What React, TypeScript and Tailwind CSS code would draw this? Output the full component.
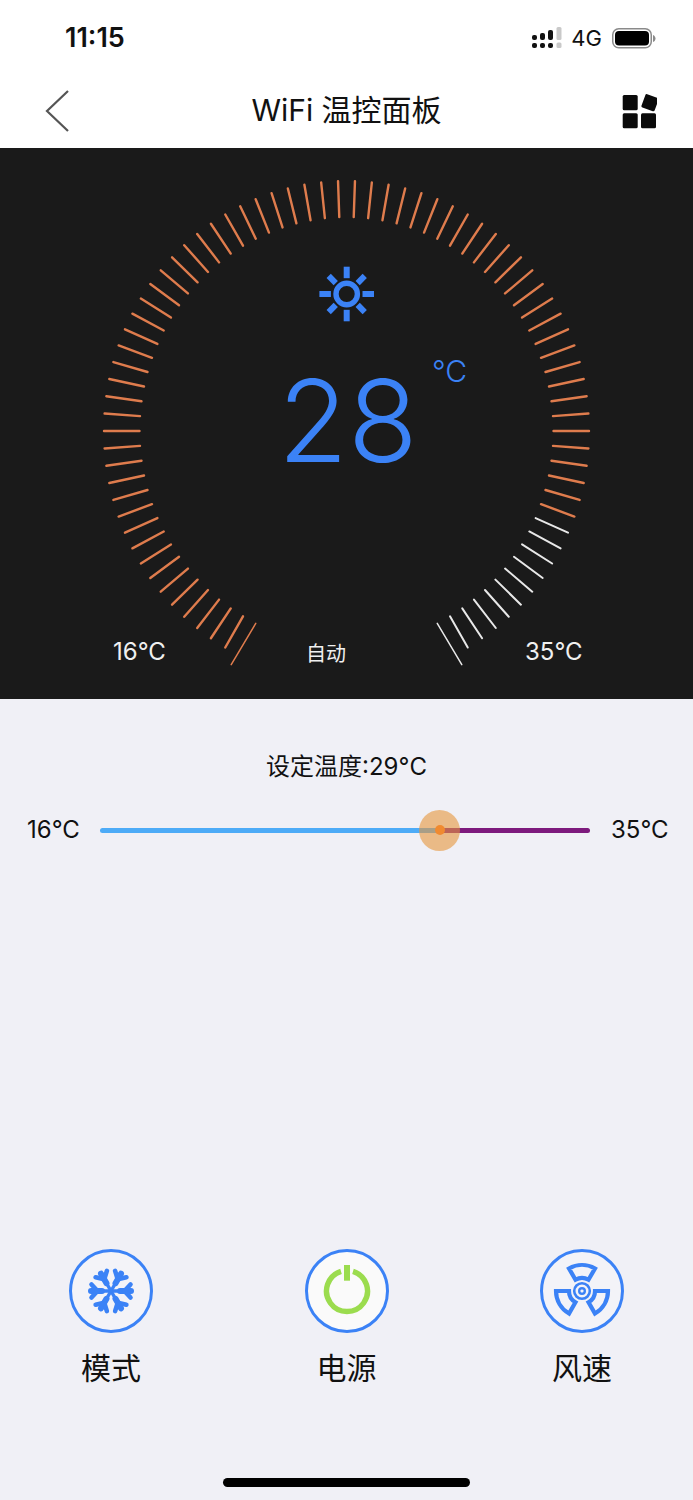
const BLUE = '#3b82f6';

// gauge ticks: one every 4deg, in page coordinates of the screenshot
const CX = 346.5;
const CY = 431;
const ticks: { x1: number; y1: number; x2: number; y2: number; white: boolean; last: boolean }[] = [];
for (let deg = -154; deg <= 154; deg += 4) {
  const a = (deg * Math.PI) / 180;
  const last = Math.abs(deg) === 154;
  const outerX = last ? 263 : 242.5;
  const outerY = last ? 260 : 250;
  ticks.push({
    x1: CX + Math.sin(a) * 207,
    y1: CY - Math.cos(a) * 214,
    x2: CX + Math.sin(a) * outerX,
    y2: CY - Math.cos(a) * outerY,
    white: deg >= 114,
    last,
  });
}

function Gauge() {
  return (
    <svg className="absolute inset-0" width="693" height="551" viewBox="0 148 693 551" fill="none">
      {ticks.map((t, i) => (
        <line
          key={i}
          x1={t.x1}
          y1={t.y1}
          x2={t.x2}
          y2={t.y2}
          stroke={t.white ? '#e8e8e8' : '#df7c4d'}
          strokeWidth={t.last ? 1.5 : t.white ? 2 : 2.4}
          strokeLinecap="round"
        />
      ))}
      <circle cx="346.7" cy="294" r="10.7" stroke={BLUE} strokeWidth="5.4" />
      {[0, 90, 180, 270].map((r) => (
        <rect key={r} x="343.7" y="266.7" width="6" height="11.5" fill={BLUE} transform={`rotate(${r} 346.7 294)`} />
      ))}
      {[45, 135, 225, 315].map((r) => (
        <rect key={r} x="343.7" y="268.5" width="6" height="10" fill={BLUE} transform={`rotate(${r} 346.7 294)`} />
      ))}
    </svg>
  );
}

function SignalIcon() {
  return (
    <svg width="30" height="22" viewBox="0 0 30 22" fill="#111">
      <rect x="0" y="8" width="5" height="5" rx="2" />
      <rect x="0" y="16" width="5" height="5" rx="2" />
      <rect x="8" y="6" width="5" height="7" rx="2" />
      <rect x="8" y="16" width="5" height="5" rx="2" />
      <rect x="16" y="3" width="5" height="10" rx="2" />
      <rect x="16" y="16" width="5" height="5" rx="2" />
      <rect x="24.5" y="0" width="5" height="13" rx="1.5" fill="#c9c9c9" />
      <rect x="24.5" y="15.5" width="5" height="5.5" rx="1.5" fill="#c9c9c9" />
    </svg>
  );
}

function BatteryIcon() {
  return (
    <svg width="45" height="21" viewBox="0 0 45 21" fill="none">
      <rect x="0.75" y="0.75" width="38.5" height="19" rx="6" stroke="#8a8a8a" strokeWidth="1.5" />
      <rect x="3" y="3" width="34" height="14.5" rx="4" fill="#000" />
      <path d="M41 7v7c1.5-.5 2.5-2 2.5-3.500S42.500 7.500 41 7z" fill="#8a8a8a" />
    </svg>
  );
}

function AppsIcon() {
  return (
    <svg width="36" height="36" viewBox="620 92 36 36" fill="#0a0a0a">
      <rect x="621.700" y="94" width="15" height="15.300" rx="1.500" />
      <rect x="621.700" y="112.300" width="15" height="15" rx="1.500" />
      <rect x="640" y="112.300" width="15" height="15" rx="1.500" />
      <rect x="642" y="94.700" width="14" height="14" rx="1.500" transform="rotate(20 649 101.700)" />
    </svg>
  );
}

function SnowIcon() {
  return (
    <svg width="52" height="52" viewBox="-26 -26 52 52" fill="none" stroke={BLUE} strokeLinecap="round">
      {[30, 90, 150, 210, 270, 330].map((r) => (
        <g key={r} transform={`rotate(${r})`}>
          <path d="M0 0V-19" strokeWidth="3.4" />
          <path d="M0-9V-20" strokeWidth="6" />
          <path d="M-6.500-19.500L0-13.500L6.500-19.500" strokeWidth="4.600" />
          <path d="M-4.500-5.500L0-1" strokeWidth="0" />
        </g>
      ))}
    </svg>
  );
}

function PowerIcon() {
  return (
    <svg width="52" height="52" viewBox="-26 -26 52 52" fill="none" stroke="#9bdc4e">
      <path d="M-6-19.600A20.500 20.500 0 1 0 6-19.600" strokeWidth="5.400" />
      <path d="M0-28V-10.300" strokeWidth="6" />
    </svg>
  );
}

function FanIcon() {
  return (
    <svg width="60" height="60" viewBox="-30 -30 60 60" fill="none" stroke={BLUE}>
      {[0, 120, 240].map((r) => (
        <path
          key={r}
          d="M-6.500-11.300L-13-22.500A26 26 0 0 1 13-22.500L6.500-11.300A13 13 0 0 0-6.500-11.300Z"
          strokeWidth="4.200"
          strokeLinejoin="miter"
          transform={`rotate(${r})`}
        />
      ))}
      <circle r="7.800" strokeWidth="2.600" />
      <circle r="2.800" strokeWidth="2.400" />
    </svg>
  );
}

function RoundButton({ label, light, children }: { label: string; light?: boolean; children: React.ReactNode }) {
  return (
    <div className="flex w-[84px] flex-col items-center">
      <div
        className={`flex h-[84px] w-[84px] items-center justify-center rounded-full border-[3px] border-[#3b82f6] ${
          light ? 'bg-[#fafafa]' : 'bg-[#f3f3f8]'
        }`}
      >
        {children}
      </div>
      <span className="mt-[17px] text-[30px] leading-[36px] text-[#111]">{label}</span>
    </div>
  );
}

export default function App() {
  return (
    <div className="flex h-[1500px] w-[693px] flex-col overflow-hidden bg-[#f0f0f6] font-['Inter','Noto_Sans_CJK_SC',sans-serif]">
      <div className="bg-white">
        {/* status bar */}
        <div className="flex h-[76px] items-center justify-between pl-[65px] pr-[36px]">
          <span className="text-[27px] font-semibold text-[#111]">11:15</span>
          <div className="flex items-center">
            <SignalIcon />
            <span className="ml-[9px] text-[22px] text-[#111]">4G</span>
            <span className="ml-[10px]">
              <BatteryIcon />
            </span>
          </div>
        </div>
        {/* nav */}
        <div className="relative flex h-[72px] items-center justify-between pb-[3px] pl-[44px] pr-[36px]">
          <svg width="26" height="44" viewBox="0 0 26 44" fill="none">
            <path d="M24 2L3 22L24 42" stroke="#555" strokeWidth="2.200" />
          </svg>
          <h1 className="absolute inset-x-0 text-center text-[30px] font-normal text-[#111]">WiFi 温控面板</h1>
          <AppsIcon />
        </div>
      </div>

      <div className="relative h-[551px] bg-[#1a1a1a]">
        <Gauge />
        <span className="absolute left-[278px] top-[205px] text-[114px] font-light leading-[136px] text-[#3b82f6]">28</span>
        <span className="absolute left-[432px] top-[205px] text-[30px] font-light leading-[36px] text-[#3b82f6]">°C</span>
        <span className="absolute left-[113px] top-[489px] text-[24px] leading-[30px] text-[#f0f0f0]">16°C</span>
        <span className="absolute left-[306px] top-[492px] text-[20px] leading-[28px] text-[#f0f0f0]">自动</span>
        <span className="absolute left-[525px] top-[489px] text-[24px] leading-[30px] text-[#f0f0f0]">35°C</span>
      </div>

      <div className="flex flex-1 flex-col">
        <p className="pt-[52px] text-center text-[24px] leading-[32px] text-[#111]">设定温度:29°C</p>
        <div className="mt-[31px] flex items-center pl-[27px] pr-[27px] text-[24px] leading-[32px] text-[#111]">
          <span className="w-[73px]">16°C</span>
          <div className="relative flex h-[5px] flex-1">
            <div className="w-[340px] rounded-l-full bg-[#4dabf7]" />
            <div className="flex-1 rounded-r-full bg-[#7d1a7d]" />
            <div className="absolute left-[319px] top-[-18px] flex h-[41px] w-[41px] items-center justify-center rounded-full bg-[#e6963c]/60">
              <div className="h-[10px] w-[10px] rounded-full bg-[#f08a30]" />
            </div>
          </div>
          <span className="w-[76px] pl-[21px]">35°C</span>
        </div>
      </div>

      <div className="flex justify-between px-[69px]">
        <RoundButton label="模式">
          <SnowIcon />
        </RoundButton>
        <RoundButton label="电源" light>
          <PowerIcon />
        </RoundButton>
        <RoundButton label="风速">
          <FanIcon />
        </RoundButton>
      </div>

      <div className="flex justify-center pb-[13px] pt-[92px]">
        <div className="h-[9px] w-[247px] rounded-full bg-black" />
      </div>
    </div>
  );
}
